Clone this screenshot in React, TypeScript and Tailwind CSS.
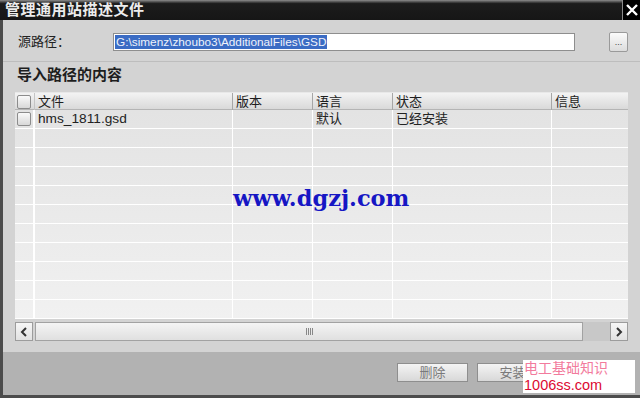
import React from "react";

const cjk = { fontFamily: '"Liberation Sans", "Noto Sans CJK SC", sans-serif' };

const cols = "grid grid-cols-[20px_198px_80px_80px_159px_76px]";

function CheckBox() {
    return (
        <div className="w-[14px] h-[14px] border border-[#8c8c8c] rounded-[2px] bg-gradient-to-b from-[#fafafa] to-[#d8d8d8]" />
    );
}

function Chevron({ dir }: { dir: "left" | "right" }) {
    return (
        <svg width="8" height="10" viewBox="0 0 8 10">
            <path
                d={dir === "left" ? "M6 1 L2 5 L6 9" : "M2 1 L6 5 L2 9"}
                fill="none"
                stroke="#333"
                strokeWidth="2"
            />
        </svg>
    );
}

export default function App() {
    const headers = ["文件", "版本", "语言", "状态", "信息"];
    const rows = Array.from({ length: 11 }, (_, i) => i);

    return (
        <div className="relative w-[640px] h-[398px] flex flex-col bg-[#d3d3d3] overflow-hidden" style={cjk}>
            {/* Title bar */}
            <div className="h-[20px] flex items-stretch bg-gradient-to-b from-[#8e8e8e] via-[#1c1c1c] via-[18%] to-[#161616]">
                <div className="flex-1 pl-[5px] text-[15px] leading-[20px] font-bold text-[#ececec] tracking-[0.5px]">
                    管理通用站描述文件
                </div>
                <div className="w-[18px] border-l border-[#8a8a8a] bg-black flex items-center justify-center">
                    <svg width="14" height="14" viewBox="0 0 14 14">
                        <path d="M2 2 L12 12 M12 2 L2 12" stroke="#fff" strokeWidth="2.4" />
                    </svg>
                </div>
            </div>

            {/* Body */}
            <div className="flex-1 flex flex-col border-l-[3px] border-b-[3px] border-[#4c4c4c]">
                <div className="pl-[12px] flex flex-col">
                    {/* Source path */}
                    <div className="mt-[13px] h-[18px] flex items-center">
                        <div className="w-[98px] pl-[3px] text-[13px] text-[#222]">源路径：</div>
                        <div className="w-[462px] h-[18px] bg-white border border-[#8e8e8e] flex items-center pl-[1px]">
                            <span className="bg-[#3b6cc4] text-[#eef2fb] text-[11.8px] leading-[14px] px-[1px]">
                                G:\simenz\zhoubo3\AdditionalFiles\GSD
                            </span>
                        </div>
                        <div className="ml-[34px] w-[19px] h-[20px] border border-[#9a9a9a] rounded-[2px] bg-gradient-to-b from-[#fbfbfb] to-[#dcdcdc] text-[9px] text-[#444] flex items-center justify-center leading-none">
                            ...
                        </div>
                    </div>
                </div>

                <div className="mt-[10px] h-px bg-[#bdbdbd]" />

                <div className="pl-[12px] flex flex-col">
                    <div className="mt-[5px] h-[16px] pl-[2px] text-[15px] leading-[16px] font-bold text-[#1e1e1e]">
                        导入路径的内容
                    </div>

                    {/* Table */}
                    <div className="relative mt-[9px] w-[613px]">
                        <div className={`${cols} h-[18px] bg-gradient-to-b from-[#f3f3f3] to-[#d9d9d9] border-b border-[#b4b4b4] border-t border-t-[#e8e8e8]`}>
                            <div className="flex items-center pl-[2px] border-r border-[#c4c4c4]">
                                <CheckBox />
                            </div>
                            {headers.map((h, i) => (
                                <div
                                    key={h}
                                    className={`pl-[3px] text-[13px] leading-[17px] text-[#1e1e1e] ${i < 4 ? "border-r border-[#a6a6a6]" : ""}`}
                                >
                                    {h}
                                </div>
                            ))}
                        </div>
                        <div className="bg-gradient-to-b from-[#e3e3e3] to-[#f1f1f1]">
                            {rows.map((r) => (
                                <div key={r} className={`${cols} h-[19px] border-b border-white`}>
                                    <div className="flex items-center pl-[2px] border-r-[2px] border-white">
                                        {r === 0 && <CheckBox />}
                                    </div>
                                    <div className="pl-[3px] text-[13.7px] leading-[18px] text-[#222] border-r border-white">
                                        {r === 0 ? "hms_1811.gsd" : ""}
                                    </div>
                                    <div className="border-r border-white" />
                                    <div className="pl-[3px] text-[13px] leading-[18px] text-[#222] border-r border-white">
                                        {r === 0 ? "默认" : ""}
                                    </div>
                                    <div className="pl-[3px] text-[13px] leading-[18px] text-[#222] border-r border-white">
                                        {r === 0 ? "已经安装" : ""}
                                    </div>
                                    <div />
                                </div>
                            ))}
                        </div>

                        {/* Watermark */}
                        <div
                            className="absolute left-[218px] top-[95px] text-[22.5px] font-bold text-[#1616c4] leading-none"
                            style={{ fontFamily: '"DejaVu Serif", serif' }}
                        >
                            www.dgzj.com
                        </div>
                    </div>

                    {/* Horizontal scrollbar */}
                    <div className="mt-[3px] h-[19px] w-[613px] flex">
                        <div className="w-[18px] border border-[#9c9c9c] bg-gradient-to-b from-[#f6f6f6] to-[#e2e2e2] flex items-center justify-center">
                            <Chevron dir="left" />
                        </div>
                        <div className="ml-[2px] w-[548px] border border-[#a2a2a2] bg-gradient-to-b from-[#f4f4f4] to-[#e0e0e0] flex items-center justify-center">
                            <div className="flex gap-[1px]">
                                <div className="w-px h-[7px] bg-[#888]" />
                                <div className="w-px h-[7px] bg-[#888]" />
                                <div className="w-px h-[7px] bg-[#888]" />
                                <div className="w-px h-[7px] bg-[#888]" />
                            </div>
                        </div>
                        <div className="w-[27px] bg-[#c8c8c8]" />
                        <div className="w-[18px] border border-[#9c9c9c] bg-gradient-to-b from-[#f6f6f6] to-[#e2e2e2] flex items-center justify-center">
                            <Chevron dir="right" />
                        </div>
                    </div>
                </div>

                {/* Footer */}
                <div className="mt-[11px] flex-1 bg-[#b2b2b2] pt-[11px] pl-[394px] flex gap-[9px] items-start">
                    <div className="w-[71px] h-[19px] border border-[#8e8e8e] bg-gradient-to-b from-[#f4f4f4] to-[#d8d8d8] text-[13px] leading-[17px] text-[#7a7a7a] flex justify-center">
                        <span>删除</span>
                    </div>
                    <div className="w-[71px] h-[19px] border border-[#8e8e8e] bg-gradient-to-b from-[#f4f4f4] to-[#d8d8d8] text-[13px] leading-[17px] text-[#7a7a7a] flex justify-center">
                        <span>安装</span>
                    </div>
                </div>
            </div>

            {/* Site watermark */}
            <div className="absolute left-[523px] top-[360px] w-[112px] h-[33px] bg-white pl-[1px] flex flex-col">
                <div className="h-[16px] text-[14px] leading-[16px] text-[#f27b9d]">
                    电工基础知识
                </div>
                <div className="mt-[1px] h-[16px] text-[14.5px] leading-[16px] text-[#dc0a32]">
                    1006ss.com
                </div>
            </div>
        </div>
    );
}
